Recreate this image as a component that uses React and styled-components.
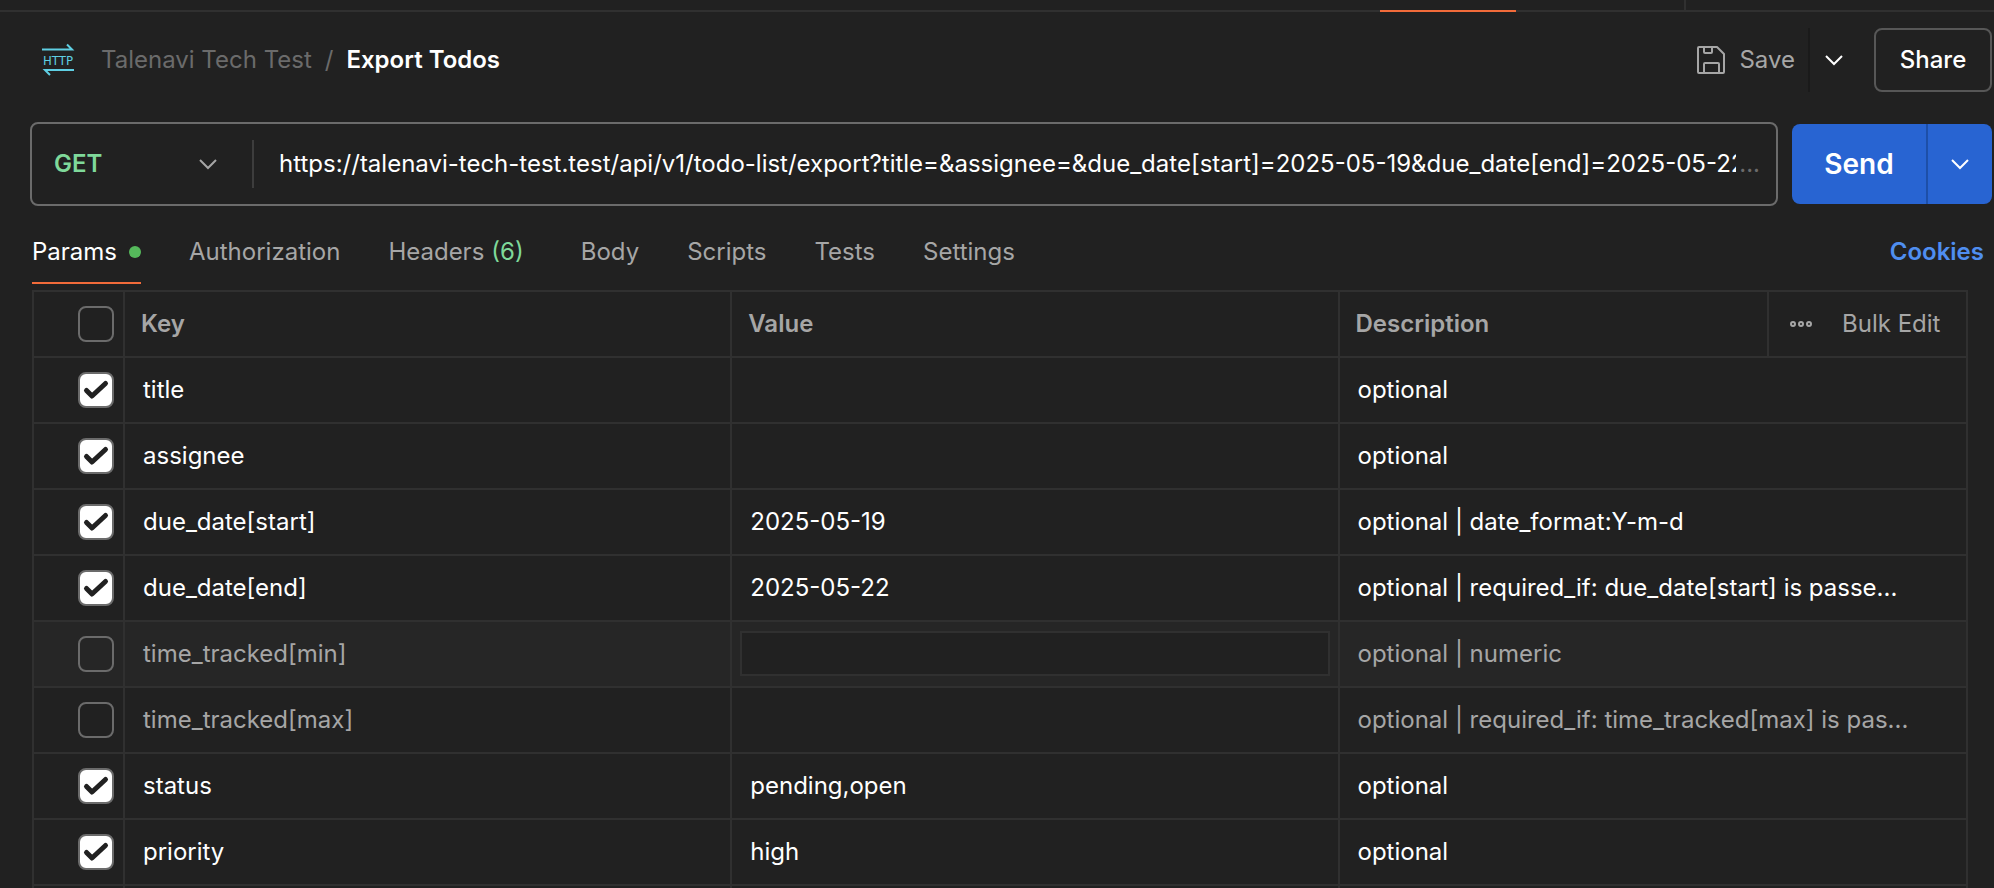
import React from 'react';
import styled, { createGlobalStyle, css } from 'styled-components';

const color = {
  bg: '#212121',
  rowHover: '#262626',
  line: '#303030',
  border: '#6b6b6b',
  text: '#ffffff',
  soft: '#a6a6a6',
  faint: '#6b6b6b',
  green: '#7fd99a',
  dot: '#55b95b',
  orange: '#f26b3a',
  blue: '#2864d2',
  blueLine: '#1d4fa8',
  link: '#4f8ef0',
  cyan: '#5fcfe3',
};

const GlobalStyle = createGlobalStyle`
  *, *::before, *::after { box-sizing: border-box; }
  body {
    margin: 0;
    background: ${color.bg};
    color: ${color.text};
    font-family: Inter, "Liberation Sans", sans-serif;
    font-size: 24px;
    line-height: 32px;
  }
  button, input, select { font: inherit; color: inherit; }
  button { background: none; border: 0; padding: 0; cursor: pointer; }
`;

const Page = styled.div`
  height: 100vh;
  overflow: hidden;
`;

const TabStrip = styled.div`
  display: flex;
  justify-content: flex-end;
  height: 12px;
  border-bottom: 2px solid ${color.line};
`;

const OpenTab = styled.div`
  width: 136px;
  height: 12px;
  border-bottom: 2px solid ${color.orange};
`;

const StripTab = styled.div`
  width: 170px;
  height: 10px;
  border-right: 2px solid ${color.line};
`;

const StripEnd = styled.div`
  width: 308px;
`;

const Header = styled.header`
  display: flex;
  align-items: center;
  justify-content: space-between;
  padding: 16px 2px 0 42px;
`;

const Breadcrumb = styled.nav`
  display: flex;
  align-items: center;
  color: ${color.faint};
  white-space: nowrap;

  svg { margin-right: 25px; }
  a { color: inherit; text-decoration: none; }
  span { margin: 0 13px; }
`;

const Title = styled.h1`
  margin: 0;
  font-size: 24px;
  font-weight: 600;
  line-height: 32px;
  color: ${color.text};
`;

const Actions = styled.div`
  display: flex;
  align-items: center;
  height: 64px;
`;

const SaveButton = styled.button`
  display: flex;
  align-items: center;
  gap: 13px;
  height: 64px;
  padding-right: 13px;
  border-right: 2px solid #1a1a1a;
  color: ${color.soft};
`;

const IconButton = styled.button`
  display: flex;
  align-items: center;
  justify-content: center;
  width: 48px;
  height: 64px;
  margin-right: 16px;
`;

const ShareButton = styled.button`
  width: 118px;
  height: 64px;
  border: 2px solid #575757;
  border-radius: 8px;
  font-weight: 500;
`;

const RequestBar = styled.form`
  display: flex;
  align-items: center;
  gap: 14px;
  padding: 30px 2px 0 30px;
`;

const UrlBox = styled.div`
  display: flex;
  align-items: center;
  flex: 1;
  min-width: 0;
  height: 84px;
  padding-right: 16px;
  border: 2px solid ${color.border};
  border-radius: 8px;
`;

const MethodPicker = styled.label`
  display: flex;
  align-items: center;
  flex: none;
  width: 222px;
  height: 48px;
  padding: 0 34px 0 22px;
  border-right: 2px solid #3d3d3d;
`;

const MethodSelect = styled.select`
  flex: 1;
  min-width: 0;
  padding: 0;
  border: 0;
  appearance: none;
  background: transparent;
  color: ${color.green};
  font-weight: 600;
`;

const UrlInput = styled.input`
  flex: 1;
  min-width: 0;
  padding: 0;
  margin-left: 25px;
  border: 0;
  background: transparent;
  outline: none;
`;

const More = styled.span`
  margin-left: 3px;
  color: ${color.faint};
`;

const SendGroup = styled.div`
  display: flex;
  flex: none;
  height: 80px;
  border-radius: 8px;
  overflow: hidden;
  background: ${color.blue};
`;

const SendButton = styled.button`
  width: 134px;
  font-size: 28px;
  font-weight: 600;
`;

const SendMenu = styled.button`
  display: flex;
  align-items: center;
  justify-content: center;
  width: 66px;
  border-left: 2px solid ${color.blueLine};
`;

const SectionBar = styled.div`
  display: flex;
  align-items: flex-start;
  justify-content: space-between;
  height: 84px;
  padding: 30px 10px 0 32px;
`;

const Tabs = styled.div`
  display: flex;
  gap: 48px;
`;

const Tab = styled.button`
  display: flex;
  align-items: center;
  height: 48px;
  padding-bottom: 14px;
  border-bottom: 2px solid transparent;
  color: ${color.soft};

  ${({ $active }) => $active && css`
    color: ${color.text};
    border-color: ${color.orange};
  `}
`;

const Dot = styled.i`
  width: 12px;
  height: 12px;
  margin-left: 12px;
  border-radius: 50%;
  background: ${color.dot};
`;

const Count = styled.span`
  margin: 0 9px 0 7px;
  color: ${color.green};
`;

const Cookies = styled.a`
  color: ${color.link};
  font-weight: 600;
  text-decoration: none;
`;

const TableWrap = styled.div`
  padding: 0 26px 0 32px;
`;

const Table = styled.table`
  width: 100%;
  table-layout: fixed;
  border-collapse: collapse;
`;

const Col = styled.col`
  width: ${({ $width }) => $width};
`;

const cell = css`
  height: 66px;
  border: 2px solid ${color.line};
  text-align: left;
  white-space: nowrap;
  overflow: hidden;
`;

const HeadCell = styled.th`
  ${cell}
  padding: 0 16px;
  color: ${color.soft};
  font-weight: 600;
`;

const Cell = styled.td`
  ${cell}
  padding: 0 18px;
`;

const CheckCell = styled.td`
  ${cell}
  padding: 0 0 0 44px;
`;

const FieldCell = styled.td`
  ${cell}
  padding: 0 8px 2px;
`;

const Row = styled.tr`
  color: ${({ $off }) => ($off ? color.soft : color.text)};
  background: ${({ $hover }) => ($hover ? color.rowHover : 'transparent')};
`;

const CheckLabel = styled.label`
  display: grid;
  width: 36px;
  height: 36px;

  > * { grid-area: 1 / 1; }
  svg { pointer-events: none; }
`;

const CheckInput = styled.input`
  appearance: none;
  width: 36px;
  height: 36px;
  margin: 0;
  border: 2px solid ${color.border};
  border-radius: 8px;

  &:checked { background: ${color.text}; }
`;

const ValueInput = styled.input`
  display: block;
  width: 100%;
  height: 45px;
  padding: 0 8px;
  border: 2px solid ${color.line};
  background: ${color.bg};
`;

const TableTools = styled.div`
  display: flex;
  align-items: center;
  gap: 30px;
  padding-left: 5px;
  font-weight: 400;

  button { color: ${color.soft}; }
  svg { display: block; }
`;

const Chevron = ({ stroke = '#fff' }) => (
  <svg width="20" height="14" viewBox="0 0 20 14" fill="none" stroke={stroke} strokeWidth="2" aria-hidden="true">
    <path d="M2 3 L10 11 L18 3" />
  </svg>
);

const HttpIcon = () => (
  <svg width="34" height="34" viewBox="0 0 34 34" fill="none" stroke={color.cyan} strokeWidth="2" aria-hidden="true">
    <path d="M0 6.5H30L25 1.5" />
    <path d="M32 27H3L8 32" />
    <text
      x="16"
      y="22"
      textAnchor="middle"
      fill={color.cyan}
      stroke="none"
      fontFamily='"DejaVu Sans Condensed", "Liberation Sans", sans-serif'
      fontSize="13"
    >
      HTTP
    </text>
  </svg>
);

const SaveIcon = () => (
  <svg width="30" height="30" viewBox="0 0 30 30" fill="none" stroke={color.soft} strokeWidth="2" strokeLinejoin="round" aria-hidden="true">
    <path d="M3 2H21L28 9V27Q28 28 27 28H3Q2 28 2 27V3Q2 2 3 2Z" />
    <path d="M8 2V7Q8 8 9 8H15Q16 8 16 7V2" />
    <path d="M8 28V19Q8 18 9 18H22Q23 18 23 19V28" />
  </svg>
);

const DotsIcon = () => (
  <svg width="22" height="8" viewBox="0 0 22 8" fill="none" stroke={color.soft} strokeWidth="2" aria-hidden="true">
    <circle cx="3" cy="4" r="2" />
    <circle cx="11" cy="4" r="2" />
    <circle cx="19" cy="4" r="2" />
  </svg>
);

const Check = ({ label, checked }) => (
  <CheckLabel>
    <CheckInput type="checkbox" defaultChecked={checked} aria-label={label} />
    {checked && (
      <svg width="36" height="36" viewBox="0 0 36 36" fill="none" stroke={color.bg} strokeWidth="5" strokeLinecap="round" strokeLinejoin="round" aria-hidden="true">
        <path d="M8.500 18.500 L14 24 L27.500 11.500" />
      </svg>
    )}
  </CheckLabel>
);

const url =
  'https://talenavi-tech-test.test/api/v1/todo-list/export?title=&assignee=&due_date[start]=2025-05-19&due_date[end]=2025-05-22&status=pending,open&priority=high';

const tabs = ['Params', 'Authorization', 'Headers', 'Body', 'Scripts', 'Tests', 'Settings'];

const params = [
  { on: true, name: 'title', value: '', note: 'optional' },
  { on: true, name: 'assignee', value: '', note: 'optional' },
  { on: true, name: 'due_date[start]', value: '2025-05-19', note: 'optional | date_format:Y-m-d' },
  { on: true, name: 'due_date[end]', value: '2025-05-22', note: 'optional | required_if: due_date[start] is passe...' },
  { on: false, name: 'time_tracked[min]', value: '', note: 'optional | numeric', hover: true },
  { on: false, name: 'time_tracked[max]', value: '', note: 'optional | required_if: time_tracked[max] is pas...' },
  { on: true, name: 'status', value: 'pending,open', note: 'optional' },
  { on: true, name: 'priority', value: 'high', note: 'optional' },
];

export default function App() {
  return (
    <>
      <GlobalStyle />
      <Page>
        <TabStrip>
          <OpenTab />
          <StripTab />
          <StripEnd />
        </TabStrip>

        <Header>
          <Breadcrumb>
            <HttpIcon />
            <a href="#collection">Talenavi Tech Test</a>
            <span>/</span>
            <Title>Export Todos</Title>
          </Breadcrumb>
          <Actions>
            <SaveButton type="button">
              <SaveIcon />
              Save
            </SaveButton>
            <IconButton type="button" aria-label="Save options">
              <Chevron />
            </IconButton>
            <ShareButton type="button">Share</ShareButton>
          </Actions>
        </Header>

        <RequestBar onSubmit={(e) => e.preventDefault()}>
          <UrlBox>
            <MethodPicker>
              <MethodSelect aria-label="Method" defaultValue="GET">
                <option>GET</option>
              </MethodSelect>
              <Chevron stroke={color.soft} />
            </MethodPicker>
            <UrlInput type="text" aria-label="Request URL" defaultValue={url} />
            <More>...</More>
          </UrlBox>
          <SendGroup>
            <SendButton type="submit">Send</SendButton>
            <SendMenu type="button" aria-label="Send options">
              <Chevron />
            </SendMenu>
          </SendGroup>
        </RequestBar>

        <SectionBar>
          <Tabs role="tablist">
            {tabs.map((name, i) => (
              <Tab key={name} type="button" role="tab" aria-selected={i === 0} $active={i === 0}>
                {name}
                {i === 0 && <Dot />}
                {name === 'Headers' && <Count>(6)</Count>}
              </Tab>
            ))}
          </Tabs>
          <Cookies href="#cookies">Cookies</Cookies>
        </SectionBar>

        <TableWrap>
          <Table>
            <colgroup>
              <Col $width="91px" />
              <Col $width="31.4%" />
              <Col $width="31.4%" />
              <Col $width="auto" />
              <Col $width="199px" />
            </colgroup>
            <thead>
              <tr>
                <CheckCell>
                  <Check label="Select all" checked={false} />
                </CheckCell>
                <HeadCell scope="col">Key</HeadCell>
                <HeadCell scope="col">Value</HeadCell>
                <HeadCell scope="col">Description</HeadCell>
                <HeadCell>
                  <TableTools>
                    <button type="button" aria-label="More options">
                      <DotsIcon />
                    </button>
                    <button type="button">Bulk Edit</button>
                  </TableTools>
                </HeadCell>
              </tr>
            </thead>
            <tbody>
              {params.map((p) => (
                <Row key={p.name} $off={!p.on} $hover={p.hover}>
                  <CheckCell>
                    <Check label={p.name} checked={p.on} />
                  </CheckCell>
                  <Cell>{p.name}</Cell>
                  {p.hover ? (
                    <FieldCell>
                      <ValueInput type="text" aria-label={`${p.name} value`} />
                    </FieldCell>
                  ) : (
                    <Cell>{p.value}</Cell>
                  )}
                  <Cell colSpan={2}>{p.note}</Cell>
                </Row>
              ))}
              <Row>
                <CheckCell />
                <Cell />
                <Cell />
                <Cell colSpan={2} />
              </Row>
            </tbody>
          </Table>
        </TableWrap>
      </Page>
    </>
  );
}
